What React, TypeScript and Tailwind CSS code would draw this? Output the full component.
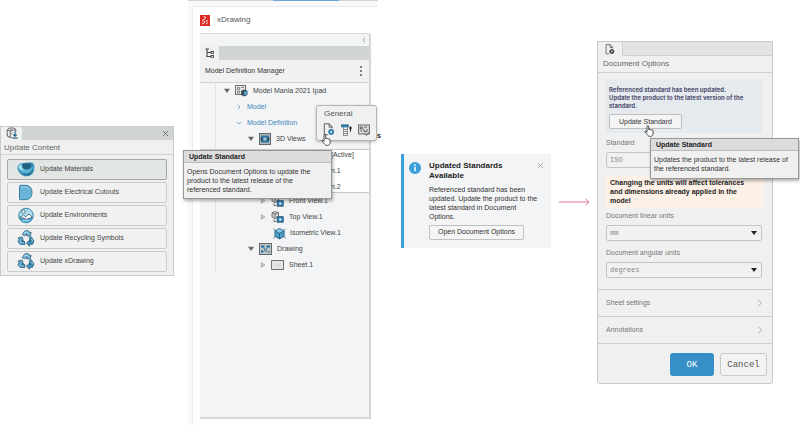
import React from 'react';
import { ChevronDown, ChevronRight, ChevronLeft, X } from 'lucide-react';

type IconProps = { className?: string };

const MaterialIcon = ({ className }: IconProps) => (
    <svg viewBox="0 0 18 16" className={className} aria-hidden="true">
        <path d="M.5 5.500C1 3 3.500 1.500 6 1.500c3-.3 7-1 9.500-.3 2 1.300 2.300 4.300 1.500 7.800-1 4-4.500 6.300-8.500 5.800C4.500 14.300 0 10 .5 5.500Z" fill="#3a93ba" />
        <path d="M5 3c2.500-1 6-1.500 9-.8 1 1.500-.5 4.800-3.500 5.300C7.500 8 4 6 5 3Z" fill="#1f5f7f" />
        <path d="M.8 4.500C2 2.500 4 1.800 5.500 2 4.500 5 6 8 9.500 8.500c3 .3 5.500-1.500 6.500-4-.3 4.500-3.500 7.300-7.500 7C4.500 11.200.8 8.500.8 4.500Z" fill="#5fb5d8" />
        <path d="M2 5c.5-1.300 1.500-1.800 2.500-2C4 5.500 5 8 7 9 4.500 9 2 7.500 2 5Z" fill="#b3e2f3" />
        <path d="M4 12.200c4.500 1.800 9.500.3 11.800-4.700-.5 4.500-3.500 6.500-7 6.500-1.800 0-3.600-.6-4.800-1.800Z" fill="#266f93" />
    </svg>
);

const CutoutIcon = ({ className }: IconProps) => (
    <svg viewBox="0 0 18 16" className={className} aria-hidden="true">
        <path d="M3.500.8h4.500c5 0 7 3 7 7.200s-2 7.200-7 7.200H3.500c-.8 0-1-.3-1-1V1.800c0-.7.2-1 1-1Z" fill="#69b5da" stroke="#2e6f92" strokeWidth=".9" />
        <path d="M4 2.500c4-.6 7 .5 8.500 3" stroke="#9bd6ec" strokeWidth="1" fill="none" />
    </svg>
);

const EnvironmentIcon = ({ className }: IconProps) => (
    <svg viewBox="0 0 18 16" className={className} aria-hidden="true">
        <circle cx="9" cy="8" r="7.300" fill="#a9daee" stroke="#3a87a9" strokeWidth="1" />
        <path d="M2 9h14c-.5 4-3.500 6.300-7 6.300S2.500 13 2 9Z" fill="#4aa5cd" />
        <path d="m2.500 10.500 4-3 2.200 2L12 6.500l3.500 3.500-3 .5-3 1.500-3-1.500Z" fill="#fff" stroke="#3b5966" strokeWidth=".8" />
        <path d="M6 13.500c2-1.500 4 .5 6-1" stroke="#e6f6fb" strokeWidth=".8" fill="none" />
        <circle cx="6.500" cy="4.200" r="1.600" fill="#fff" stroke="#3b5966" strokeWidth=".8" />
    </svg>
);

const RecycleIcon = ({ className }: IconProps) => (
    <svg viewBox="0 0 18 18" className={className} aria-hidden="true">
        <g stroke="#23516a" strokeWidth=".8" strokeLinejoin="round">
            <path d="m5 4.800 2-3c.4-.7.8-1 1.500-1h3.200l1.300 2.400 1.500-.8-1.200 4.300-4.300-.9 1.400-.9-.8-1.300L7.500 6.300Z" fill="#7cc4e2" />
            <path d="m14.300 6.800 2.600 4c.5.700.4 1.300.1 1.900l-1.200 2.500h-3v2L9.500 14l3.300-3.400v1.700h1.400l-2-3.400Z" fill="#3f97bf" />
            <path d="M7.800 12.300v3H3.400c-.7 0-1.100-.3-1.400-.8L.6 12l1.400-2.500L.5 8.600l4.400-1.200 1.400 4.300-1.400-.7-.8 1.300Z" fill="#5cb0d5" />
        </g>
        <path d="m7.500 2.500 3 .3M15 9.500l1 2M3 12l1.500 2" stroke="#c7e8f5" strokeWidth=".8" />
    </svg>
);

const BoxDownIcon = ({ className }: IconProps) => (
    <svg viewBox="0 0 12 12" className={className} aria-hidden="true" fill="none">
        <path d="m1.200 3 2-2h4.600l2 1.500V5M1.200 3v6l3 1.500V4l-3-1Zm3 1 3.500-1 2-.5M4.200 10.500h1.500" stroke="#555" strokeWidth=".9" />
        <path d="m3.500 2 3 .6M5.800 5.500v2" stroke="#888" strokeWidth=".8" />
        <path d="M9 4.500v4M7.300 7.500 9 9.200l1.700-1.700" stroke="#22648c" strokeWidth="1.200" />
        <path d="M6.300 11h5.400" stroke="#22648c" strokeWidth="1.200" />
    </svg>
);

const TreeIcon = ({ className }: IconProps) => (
    <svg viewBox="0 0 10 10" className={className} aria-hidden="true" fill="none" stroke="#444">
        <path d="M.5 1h3.500M2 1v7.500h4M2 4.500h4" strokeWidth="1.100" />
        <rect x="6" y="3.500" width="2.500" height="1.800" strokeWidth=".9" />
        <rect x="6" y="7.500" width="2.500" height="1.800" strokeWidth=".9" />
    </svg>
);

const AppLogo = ({ className }: IconProps) => (
    <svg viewBox="0 0 10 11" className={className} aria-hidden="true">
        <rect width="10" height="11" fill="#dc2a22" />
        <path d="M3.500 1.800c2-.3 2.800.6 1.800 1.700C4.300 4.500 3 4.600 2.300 5M1.800 9c2.400-.3 3.500-1.800 2.700-2.800C4 5.600 3 6 2.300 6.600M7.800 5.500c-1.500-.2-1.800.6-1 1.400.9.900.6 1.900-.8 1.900" stroke="#fff" strokeWidth=".9" fill="none" />
    </svg>
);

const SheetPartIcon = ({ className }: IconProps) => (
    <svg viewBox="0 0 13 12" className={className} aria-hidden="true">
        <rect x=".5" y=".5" width="10" height="9" fill="#e6e6e6" stroke="#707070" />
        <path d="M2.500 2.500h2v2h-2zM6 2.500h3M2.500 6h2v2h-2z" fill="none" stroke="#777" strokeWidth=".8" />
        <path d="m6 6 3-1.500 3.500 1.200v4L9.500 11.500 6 10Z" fill="#3d4f5b" />
        <path d="m9 7 3-.8v3L9.500 10.500Z" fill="#4fa8d4" />
    </svg>
);

const ViewsIcon = ({ className }: IconProps) => (
    <svg viewBox="0 0 12 12" className={className} aria-hidden="true">
        <rect x=".5" y=".5" width="11" height="11" fill="#b2b5b8" stroke="#666" />
        <path d="M2 2.500h8v7H2z" fill="#2d7cab" />
        <path d="M1.800 4.500h1.500v3H1.800zM8.700 4.500h1.500v3H8.700z" fill="#1b3f55" />
        <circle cx="6" cy="6" r="2.300" fill="#b8e0f1" stroke="#17435c" strokeWidth=".8" />
        <circle cx="6" cy="6" r=".8" fill="#3c87ad" />
    </svg>
);

const PlaneViewIcon = ({ className }: IconProps) => (
    <svg viewBox="0 0 13 12" className={className} aria-hidden="true">
        <path d="m1 2 2.500-1.500 4 1V6L4 7.500 1 6Z" fill="#d8d8d8" stroke="#666" strokeWidth=".9" />
        <path d="m1 2 3 1 3.500-1.500M4 3v4M3 8v2.500h2.500" fill="none" stroke="#666" strokeWidth=".9" />
        <rect x="6.200" y="5.700" width="6" height="5.500" fill="#2e7fb0" stroke="#1f4f6c" strokeWidth=".8" />
        <rect x="8.200" y="7.500" width="2.200" height="2" fill="#e9f5fb" />
    </svg>
);

const IsometricIcon = ({ className }: IconProps) => (
    <svg viewBox="0 0 13 13" className={className} aria-hidden="true">
        <path d="m6.500 1.500 4.600 2.200v5.600L6.500 12 1.900 9.300V3.700Z" fill="#4a9cc9" stroke="#1f5878" strokeWidth=".8" />
        <path d="m2.300 4 4.200 2.300L10.700 4 6.500 2Z" fill="#86cbe8" />
        <path d="M6.500 6.300v5.200V12M2.300 4l4.200 2.300L10.700 4M.6 2l1.700 1.500M12.400 2l-1.700 1.500M.6 11.300l1.500-2M12.400 11.300l-1.500-2" fill="none" stroke="#1f5878" strokeWidth=".8" />
    </svg>
);

const DrawingIcon = ({ className }: IconProps) => (
    <svg viewBox="0 0 13 12" className={className} aria-hidden="true">
        <rect x=".5" y=".5" width="12" height="11" fill="#c3c6c8" stroke="#666" />
        <path d="M2 2.500h3.500v2H2zM7.500 2.500H11v2H7.500zM2 7.500h2.500v2H2z" fill="#1f6f9f" />
        <path d="m4.500 4.500 3.500 4.500M8.500 4.500 5 8.500M8.500 9h2.500" stroke="#2a6d96" strokeWidth="1" fill="none" />
    </svg>
);

const PageIcon = ({ className }: IconProps) => (
    <svg viewBox="0 0 13 10" className={className} aria-hidden="true">
        <rect x=".6" y=".6" width="11.800" height="8.800" fill="#f2f2f2" stroke="#666" />
        <rect x="2.500" y="2.300" width="8" height="5.400" fill="#dedede" />
    </svg>
);

const DocumentGearIcon = ({ className, accent = '#333' }: IconProps & { accent?: string }) => (
    <svg viewBox="0 0 11 12" className={className} aria-hidden="true" fill="none">
        <path d="M4.500 10.800H1.200V.7h4.600l2.600 2.800V5M5.600.8v3h2.800" stroke="#5a5a5a" strokeWidth=".9" />
        <circle cx="7.500" cy="8.200" r="1.800" stroke={accent} strokeWidth="1.600" />
        <path d="M7.500 5.400v5.600M4.700 8.200h5.600" stroke={accent} strokeWidth=".8" />
        <circle cx="7.500" cy="8.200" r=".9" fill="#f0f0f0" />
    </svg>
);

const ListUpIcon = ({ className }: IconProps) => (
    <svg viewBox="0 0 12 12" className={className} aria-hidden="true" fill="none">
        <rect x=".5" y=".8" width="7" height="2.200" fill="#2f85b6" stroke="#205f84" strokeWidth=".6" />
        <path d="M2.500 3v8.500h4V3M2.500 5.500h4M2.500 7.500h4M2.500 9.500h4" stroke="#777" strokeWidth=".8" />
        <path d="M9.500 7.500V3M8.300 4.500 9.500 3l1.200 1.500" stroke="#222" strokeWidth="1.100" />
    </svg>
);

const SheetGearIcon = ({ className }: IconProps) => (
    <svg viewBox="0 0 12 12" className={className} aria-hidden="true" fill="none">
        <rect x=".6" y="1" width="10.800" height="9" fill="#ddd" stroke="#666" />
        <path d="M2.300 3h2v2h-2zM6 3h3M2.300 7h2M6 5v2.500h3V5M6.500 9.500l2 2 2.500-3" stroke="#555" strokeWidth=".9" />
    </svg>
);

const HandCursor = ({ className }: IconProps) => (
    <svg viewBox="0 0 10 12" className={className} aria-hidden="true">
        <path d="M3 7.300V1.700c0-1.300 1.700-1.300 1.700 0v3.100c.2-.7 1.400-.7 1.500.2.300-.6 1.400-.5 1.500.3.400-.5 1.400-.3 1.400.6v2.300c0 1.900-1 3.200-2.800 3.200-1.500 0-2.300-.6-3-1.800L1 7.100c-.5-.9.6-1.600 1.200-.8Z" fill="#fff" stroke="#222" strokeWidth=".8" />
    </svg>
);

const InfoIcon = ({ className }: IconProps) => (
    <svg viewBox="0 0 12 12" className={className} aria-hidden="true">
        <circle cx="6" cy="6" r="6" fill="#3a9fd8" />
        <circle cx="6" cy="3.200" r=".9" fill="#fff" />
        <path d="M6 5v4.300" stroke="#fff" strokeWidth="1.500" />
    </svg>
);

const Triangle = ({ open }: { open: boolean }) => (
    <svg viewBox="0 0 6 6" className="w-[6px] h-[6px] shrink-0" aria-hidden="true">
        {open
            ? <path d="M0 .8h6L3 5Z" fill="#6a6a6a" />
            : <path d="M1.200.4v5.200L5 3Z" fill="#c4c4c4" stroke="#a0a0a0" strokeWidth=".6" />}
    </svg>
);

const updateItems = [
    { label: 'Update Materials', Icon: MaterialIcon, active: true },
    { label: 'Update Electrical Cutouts', Icon: CutoutIcon },
    { label: 'Update Environments', Icon: EnvironmentIcon },
    { label: 'Update Recycling Symbols', Icon: RecycleIcon },
    { label: 'Update xDrawing', Icon: RecycleIcon },
];

const UpdateContentPanel = () => (
    <section className="mb-[24px] mr-[14px] border border-[#c9cccc] bg-[#f0f0f0] pb-[3px]">
        <div className="flex h-[13px] items-center justify-between bg-[#d0d4d4]">
            <div className="flex h-full w-[21px] items-center justify-center bg-[#f0f0f0]">
                <BoxDownIcon className="w-[12px] h-[12px]" />
            </div>
            <button aria-label="Close" className="mr-[3px] text-[#707070]"><X size={9} strokeWidth={2.500} /></button>
        </div>
        <h2 className="h-[15px] border-b border-[#d0d4d4] pl-[3px] text-[8px] leading-[15px] text-[#666]">Update Content</h2>
        <div className="flex flex-col gap-[2px] px-[6px] pt-[4px]">
            {updateItems.map(({ label, Icon, active }) => (
                <button
                    key={label}
                    className={`flex h-[21px] items-center gap-[5px] rounded-[2px] border pl-[9px] text-[#444] ${active ? 'border-[#a2a7a7] bg-[#e1e5e4]' : 'border-[#cbcbcb] bg-[#f1f1f1]'}`}
                >
                    <Icon className="w-[18px] h-[17px]" />
                    {label}
                </button>
            ))}
        </div>
    </section>
);

const Tooltip = ({ title, children }: { title: string; children: React.ReactNode }) => (
    <div role="tooltip" className="w-[149px] border border-[#989898] bg-[#f0f0f0] text-[#333] shadow-[1px_2px_3px_rgba(0,0,0,0.3)]">
        <div className="h-[12px] border-b border-[#bdbdbd] bg-[#dcdcdc] pl-[5px] font-bold leading-[12px] text-[#222]">{title}</div>
        <p className="px-[3px] pt-[4px] leading-[9px]">{children}</p>
    </div>
);

const TreeRow = ({ className, children }: { className: string; children: React.ReactNode }) => (
    <li className={`flex h-[16px] items-center ${className}`}>{children}</li>
);

const ContextToolbar = () => (
    <div className="absolute left-[128px] top-[105px] flex items-end">
        <div className="h-[36px] w-[61px] rounded-[3px] border border-[#b5b5b5] bg-[#f0f0f0] shadow-[0_1px_3px_rgba(0,0,0,0.25)]">
            <div className="pl-[7px] pt-[2px] text-[8px] leading-[12px] text-[#555]">General</div>
            <div className="flex justify-between px-[6px] pt-[3px]">
                <button aria-label="Update Standard"><DocumentGearIcon className="w-[12px] h-[13px]" accent="#2b7eb0" /></button>
                <button aria-label="Move up"><ListUpIcon className="w-[12px] h-[12px]" /></button>
                <button aria-label="Sheet options"><SheetGearIcon className="w-[12px] h-[12px]" /></button>
            </div>
        </div>
        <span className="font-bold text-[#222]">s</span>
        <HandCursor className="absolute left-[5px] top-[29px] w-[10px] h-[12px]" />
    </div>
);

const ModelManager = () => (
    <section className="relative mr-[23px] flex min-h-screen flex-col self-stretch bg-[#f9f9f9]">
        <div className="flex h-[1px] bg-[#d2d5d5]"><div className="ml-[85px] w-[66px] bg-[#71a7d8]" /></div>
        <div className="ml-[4px] mt-[5px] flex flex-1 flex-col rounded-tl-[3px] border-l border-t border-[#ebebeb] bg-white px-[7px] pb-[6px]">
            <header className="flex h-[26px] items-center gap-[7px] text-[8px] text-[#555]">
                <AppLogo className="w-[10px] h-[11px]" />
                <h1>xDrawing</h1>
            </header>
            <div className="flex-1 rounded-tr-[3px] border-b-2 border-r-2 border-t border-[#d5d8da] bg-[#f3f4f6]">
                <div className="flex h-[12px] items-center justify-end pr-[1px] text-[#777]"><ChevronLeft size={8} /></div>
                <div className="flex h-[14px] bg-[#d0d4d3]">
                    <div className="flex w-[19px] items-center justify-center bg-[#f0f1f2]"><TreeIcon className="w-[10px] h-[10px]" /></div>
                </div>
                <div className="flex h-[23px] items-center justify-between border-b border-[#d2d5d7] bg-[#f1f1f1] pl-[5px] pr-[7px] text-[#333]">
                    <h2>Model Definition Manager</h2>
                    <button aria-label="More options" className="flex flex-col gap-[2px]">
                        <i className="size-[2px] rounded-full bg-[#555]" />
                        <i className="size-[2px] rounded-full bg-[#555]" />
                        <i className="size-[2px] rounded-full bg-[#555]" />
                    </button>
                </div>
                <ul className="relative text-[#444] before:absolute before:bottom-0 before:left-[15px] before:top-0 before:w-px before:bg-[#e0e2e4]">
                    <TreeRow className="gap-[5px] pl-[24px]"><Triangle open /><SheetPartIcon className="w-[13px] h-[12px]" />Model Mania 2021 Ipad</TreeRow>
                    <TreeRow className="gap-[4px] pl-[35px] text-[#3f86bd]"><ChevronRight size={8} />Model</TreeRow>
                    <TreeRow className="gap-[4px] pl-[35px] text-[#3f86bd]"><ChevronDown size={8} />Model Definition</TreeRow>
                    <TreeRow className="gap-[5px] pl-[48px]"><Triangle open /><ViewsIcon className="w-[12px] h-[12px]" />3D Views</TreeRow>
                    <li className="mt-[2px]">
                        <ul className="relative flex flex-col gap-[6px] border-y border-[#c6c8ca] bg-white pl-[131px] leading-[10px]">
                            <li>[Active]</li>
                            <li>n.1</li>
                            <li>n.2</li>
                        </ul>
                    </li>
                    <TreeRow className="gap-[5px] pl-[60px]"><Triangle open={false} /><PlaneViewIcon className="w-[13px] h-[12px]" />Front View.1</TreeRow>
                    <TreeRow className="gap-[5px] pl-[60px]"><Triangle open={false} /><PlaneViewIcon className="w-[13px] h-[12px]" />Top View.1</TreeRow>
                    <TreeRow className="gap-[4px] pl-[73px]"><IsometricIcon className="w-[13px] h-[13px]" />Isometric View.1</TreeRow>
                    <TreeRow className="gap-[5px] pl-[48px]"><Triangle open /><DrawingIcon className="w-[13px] h-[12px]" />Drawing</TreeRow>
                    <TreeRow className="gap-[5px] pl-[60px]"><Triangle open={false} /><PageIcon className="w-[13px] h-[10px]" />Sheet.1</TreeRow>
                </ul>
            </div>
        </div>
        <div className="absolute left-[-5px] top-[150px] [&>div]:h-[49px]">
            <Tooltip title="Update Standard">Opens Document Options to update the<br />product to the latest release of the<br />referenced standard.</Tooltip>
        </div>
        <ContextToolbar />
    </section>
);

const Notification = () => (
    <section role="status" className="mb-[24px] flex items-start border-l-[3px] border-[#3a9fdc] bg-[#f3f4f6] pb-[8px] pl-[5px] pr-[6px] pt-[7px]">
        <InfoIcon className="mt-px w-[12px] h-[12px] shrink-0" />
        <div className="ml-[8px] flex-1 text-[#333]">
            <h2 className="text-[8px] font-bold leading-[10px] text-[#222]">Updated Standards<br />Available</h2>
            <p className="mt-[4px] leading-[9px]">Referenced standard has been<br />updated. Update the product to the<br />latest standard in Document<br />Options.</p>
            <button className="mt-[4px] h-[15px] rounded-[2px] border border-[#bfc1c3] bg-[#f5f5f5] px-[8px]">Open Document Options</button>
        </div>
        <button aria-label="Dismiss" className="-ml-[9px] text-[#999]"><X size={9} strokeWidth={2} /></button>
    </section>
);

const SelectField = ({ id, label, options }: { id: string; label: string; options: string[] }) => (
    <div className="flex flex-col gap-[4px]">
        <label htmlFor={id} className="leading-[10px]">{label}</label>
        <div className="relative">
            <select id={id} className="block h-[16px] w-full appearance-none rounded-[2px] border border-[#c4c4c4] bg-[#f1f1f1] pl-[3px] font-['Liberation_Mono',monospace] text-[#888]">
                {options.map(o => <option key={o}>{o}</option>)}
            </select>
            <svg viewBox="0 0 6 4" className="pointer-events-none absolute right-[5px] top-[6px] w-[6px] h-[4px]" aria-hidden="true">
                <path d="M0 0h6L3 4Z" fill="#222" />
            </svg>
        </div>
    </div>
);

const DocumentOptions = () => (
    <section className="relative mr-[27px] rounded-b-[3px] border border-[#c8caca] bg-[#f0f0f0] text-[#777]">
        <div className="flex h-[14px] border-b border-[#cfd1d1] bg-[#e2e3e2]">
            <div className="flex h-[14px] w-[25px] items-center justify-center border-r border-[#cfd1d1] bg-[#f0f0f0]">
                <DocumentGearIcon className="w-[10px] h-[11px]" />
            </div>
        </div>
        <h2 className="h-[17px] border-b border-[#cfd1d1] pl-[5px] text-[8px] leading-[16px] text-[#666]">Document Options</h2>
        <div className="border-b border-[#cfd1d1] px-[8px] pb-[11px] pt-[7px]">
            <div className="mr-[2px] bg-[#e5eaef] px-[3px] pb-[4px] pt-[6px]">
                <p className="font-[Inter,sans-serif] text-[6px] font-bold leading-[8px] text-[#505070]">Referenced standard has been updated.<br />Update the product to the latest version of the<br />standard.</p>
                <button className="mt-[4px] h-[15px] rounded-[2px] border border-[#bcbfc2] bg-[#f4f4f4] px-[9px] text-[#333]">Update Standard</button>
            </div>
            <div className="flex flex-col gap-[7px] pt-[5px]">
                <div className="mr-[2px]"><SelectField id="standard" label="Standard" options={['ISO', 'ANSI']} /></div>
                <p className="bg-[#fdf1e7] py-[3px] pl-[4px] font-bold leading-[9px] text-[#222]">Changing the units will affect tolerances<br />and dimensions already applied in the<br />model</p>
                <div className="-mt-[4px] mr-[2px] flex flex-col gap-[7px]">
                    <SelectField id="linear" label="Document linear units" options={['mm', 'inch']} />
                    <SelectField id="angular" label="Document angular units" options={['degrees', 'radians']} />
                </div>
            </div>
        </div>
        {['Sheet settings', 'Annotations'].map(label => (
            <button key={label} className="flex h-[27px] w-full items-center justify-between border-b border-[#cfd1d1] pl-[8px] pr-[6px]">
                {label}
                <ChevronRight size={12} strokeWidth={2} className="text-[#aaa]" />
            </button>
        ))}
        <div className="flex justify-end gap-[6px] pb-[7px] pr-[5px] pt-[9px] font-['Liberation_Mono',monospace] text-[9px]">
            <button className="h-[23px] w-[44px] rounded-[3px] bg-[#378fc7] text-white">OK</button>
            <button className="h-[23px] w-[47px] rounded-[3px] border border-[#c8caca] bg-[#f3f3f3] text-[#555]">Cancel</button>
        </div>
        <HandCursor className="absolute left-[46px] top-[83px] w-[10px] h-[12px]" />
        <div className="absolute left-[52px] top-[96px] [&>div]:h-[41px]">
            <Tooltip title="Update Standard">Updates the product to the latest release of<br />the referenced standard.</Tooltip>
        </div>
    </section>
);

export default function App() {
    return (
        <main className="grid min-h-screen grid-cols-[188fr_213fr_150fr_46fr_203fr] items-center overflow-hidden bg-white font-['Liberation_Sans',Arial,sans-serif] text-[7px] leading-[10px]">
            <UpdateContentPanel />
            <ModelManager />
            <Notification />
            <svg viewBox="0 0 31 8" className="mx-auto mb-[22px] w-[31px] h-[8px]" aria-hidden="true" fill="none" stroke="#e0709f">
                <path d="M0 4h30M26.500.8 30 4l-3.500 3.200" strokeWidth="1" />
            </svg>
            <DocumentOptions />
        </main>
    );
}
